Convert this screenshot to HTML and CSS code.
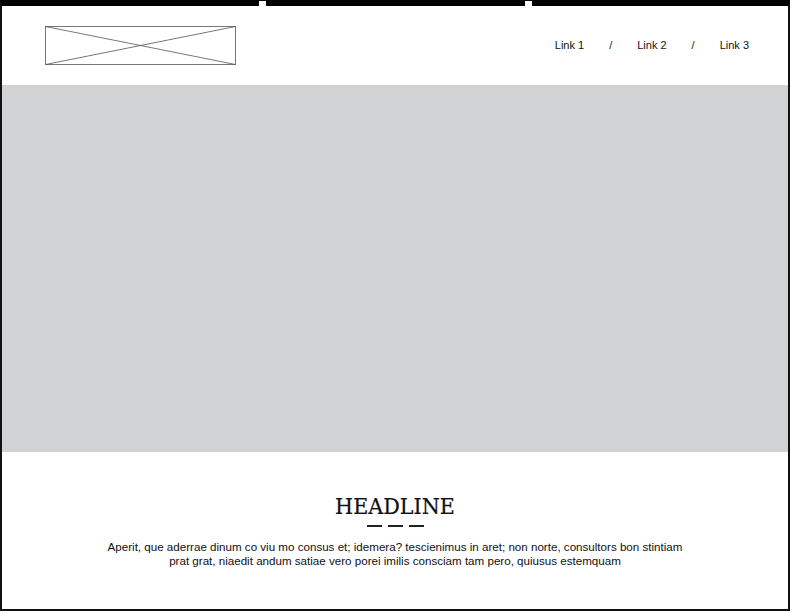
FILE: index.html
```html
<!DOCTYPE html>
<html>
<head>
<meta charset="utf-8">
<link rel="stylesheet" href="styles.css">
</head>
<body>
<div class="frame">
  <span class="notch notch-a"></span>
  <span class="notch notch-b"></span>
  <header class="header">
    <div class="logo">
      <svg width="191" height="39" viewBox="0 0 191 39" preserveAspectRatio="none">
        <rect x="0.5" y="0.5" width="190" height="38" fill="#fff" stroke="#777" stroke-width="1"/>
        <line x1="0.5" y1="0.5" x2="190.5" y2="38.5" stroke="#555" stroke-width="0.8"/>
        <line x1="0.5" y1="38.5" x2="190.5" y2="0.5" stroke="#555" stroke-width="0.8"/>
      </svg>
    </div>
    <nav class="nav">
      <a class="nav-link">Link 1</a>
      <span class="sep">/</span>
      <a class="nav-link">Link 2</a>
      <span class="sep">/</span>
      <a class="nav-link">Link 3</a>
    </nav>
  </header>
  <section class="hero"></section>
  <section class="content">
    <h1 class="headline">HEADLINE</h1>
    <div class="dashes"><span></span><span></span><span></span></div>
    <p class="body-text">Aperit, que aderrae dinum co viu mo consus et; idemera? tescienimus in aret; non norte, consultors bon stintiam<br>prat grat, niaedit andum satiae vero porei imilis consciam tam pero, quiusus estemquam</p>
  </section>
</div>
</body>
</html>
```

FILE: styles.css
```css
html, body {
  margin: 0;
  padding: 0;
  background: #fff;
}
.frame {
  position: relative;
  box-sizing: border-box;
  width: 790px;
  height: 611px;
  border: 2px solid #111;
  border-top: 6px solid #000;
  display: flex;
  flex-direction: column;
  font-family: "Liberation Sans", Arial, sans-serif;
  color: #1a1a1a;
}
.notch {
  position: absolute;
  top: -5px;
  width: 7px;
  height: 5px;
  background: #fff;
}
.notch-a { left: 257px; }
.notch-b { left: 523px; }
.header {
  height: 79px;
  box-sizing: border-box;
  padding: 20px 39px 0 43px;
  display: flex;
  justify-content: space-between;
  align-items: flex-start;
}
.logo svg {
  display: block;
}
.nav {
  display: flex;
  gap: 25px;
  margin-top: 12px;
  font-size: 11px;
  line-height: 14px;
}
.nav-link {
  color: #111;
  text-decoration: none;
}
.hero {
  height: 367px;
  background: #d1d2d4;
}
.content {
  flex: 1;
  display: flex;
  flex-direction: column;
  align-items: center;
  padding-top: 40px;
}
.headline {
  margin: 0;
  font-family: "DejaVu Serif Condensed", "DejaVu Serif", serif;
  font-weight: normal;
  font-size: 23px;
  line-height: 28px;
  color: #111;
  -webkit-text-stroke: 0.2px #111;
}
.dashes {
  display: flex;
  gap: 6px;
  margin-top: 5px;
}
.dashes span {
  width: 15px;
  height: 2px;
  background: #222;
}
.body-text {
  margin: 13px 0 0;
  font-size: 11.6px;
  line-height: 14px;
  text-align: center;
  color: #111;
}
```
